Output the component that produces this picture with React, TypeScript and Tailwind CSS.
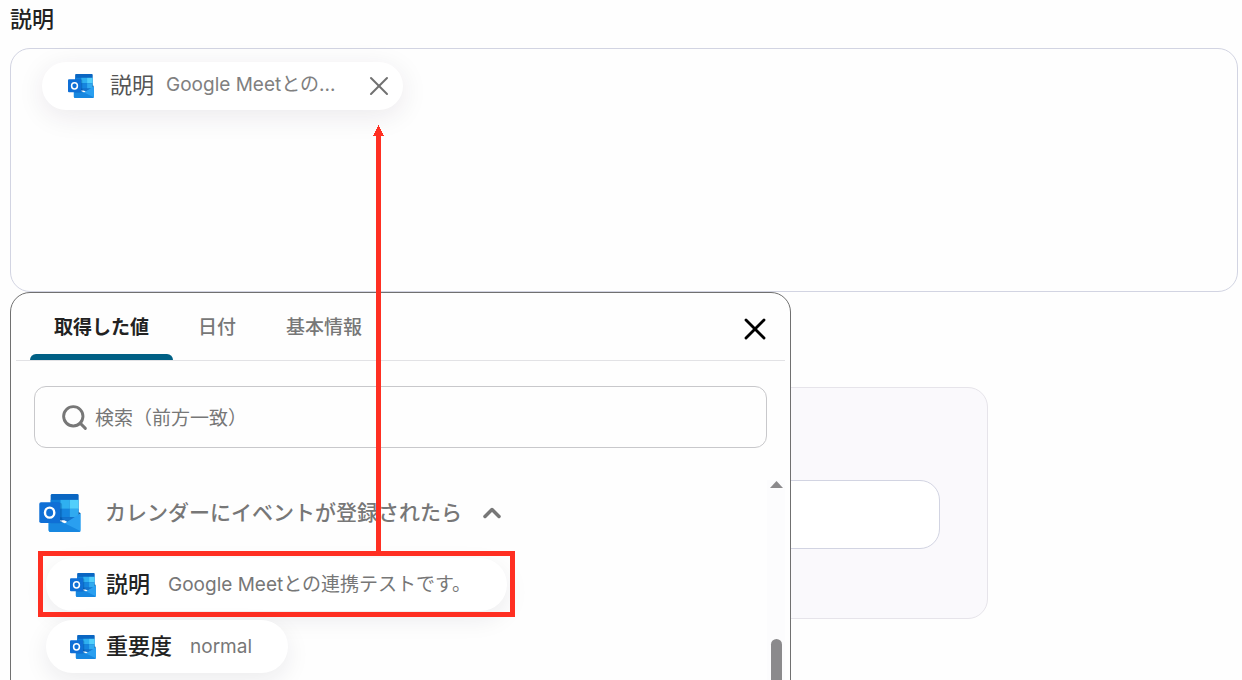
import { ChevronUp, Search, X } from "lucide-react";

const tabs = [
    { name: "取得した値", active: true },
    { name: "日付", active: false },
    { name: "基本情報", active: false },
];

const values = [
    { label: "説明", sample: "Google Meetとの連携テストです。", marked: true },
    { label: "重要度", sample: "normal", marked: false },
];

function OutlookLogo({ className }: { className: string }) {
    return (
        <svg viewBox="0 0 120 110" className={className} aria-hidden="true">
            <path d="M37 0h73a4 4 0 0 1 4 4v72H33V4a4 4 0 0 1 4-4z" fill="#0a66c2" />
            <path d="M33 17h28v26H33z" fill="#1080dc" />
            <path d="M61 17h27v26H61z" fill="#2fb0f0" />
            <path d="M88 17h26v26H88z" fill="#52cffb" />
            <path d="M33 43h28v24H33z" fill="#0b6cc6" />
            <path d="M61 43h27v24H61z" fill="#1585df" />
            <path d="M88 43h26v24H88z" fill="#30aaf0" />
            <path d="M61 67h48L82 82z" fill="#1474ce" />
            <path d="M114 52l6 4-6 5z" fill="#15508c" />
            <path d="M120 56v49a5 5 0 0 1-5 5H32a5 5 0 0 1-5-5V72l45 14z" fill="#2a9ff0" />
            <path d="M27 62l92 45a5 5 0 0 1-4 3H32a5 5 0 0 1-5-5z" fill="#1787e0" />
            <path d="M33 25h27a6 6 0 0 1 6 6v48a6 6 0 0 1-6 6H33z" fill="#004a94" opacity=".3" />
            <rect y="24" width="60" height="60" rx="5" fill="#0f6fd6" />
            <ellipse cx="30" cy="54" rx="13.500" ry="14.500" fill="none" stroke="#fff" strokeWidth="7" />
        </svg>
    );
}

// Red frame round a value, with an arrow up to the chip it becomes
function Marker() {
    return (
        <div className="pointer-events-none absolute -inset-x-2 -top-[7px] -bottom-[6px] border-[5px] border-[#ff2f22]">
            <svg
                viewBox="0 0 12 431"
                className="absolute bottom-full left-[330px] h-[431px] w-3"
                shapeRendering="crispEdges"
                aria-hidden="true"
            >
                <path d="M5.500 0L11 11H8V431H3V11H0z" fill="#ff2f22" />
            </svg>
        </div>
    );
}

function DescriptionField() {
    return (
        <section>
            <h2 className="h-12 pt-[3px] text-[22px] leading-8 font-medium text-[#222]">説明</h2>
            <div className="h-[244px] rounded-[20px] border border-[#d2d4e2] pt-[13px] pl-[31px]">
                <div className="inline-flex h-12 items-center rounded-full bg-white pr-2 pl-[26px] shadow-[0_6px_28px_rgba(40,20,60,0.09)]">
                    <OutlookLogo className="h-6 w-[26px]" />
                    <span className="ml-4 pb-[2px] text-[22px] leading-8 text-[#555]">説明</span>
                    <span className="ml-3 pb-[2px] text-[19px] leading-8 text-[#808080]">Google Meetとの...</span>
                    <button type="button" aria-label="削除" className="ml-7 text-[#707070]">
                        <X className="size-8" strokeWidth={1.5} />
                    </button>
                </div>
            </div>
        </section>
    );
}

function ValuePicker() {
    return (
        <div className="absolute top-0 left-0 flex h-[640px] w-[781px] flex-col rounded-t-[20px] border border-[#707070] bg-[#fefefe] px-[5px]">
            <div className="flex h-[68px] items-start border-b border-[#e2e2e5] pr-3 pl-[14px]">
                <div role="tablist" className="flex h-full">
                    {tabs.map((tab) => (
                        <button
                            key={tab.name}
                            type="button"
                            role="tab"
                            aria-selected={tab.active}
                            className={
                                tab.active
                                    ? "relative px-6 pt-1 text-[19px] font-bold text-[#222]"
                                    : "relative px-[25px] pt-1 text-[19px] font-medium text-[#777]"
                            }
                        >
                            {tab.name}
                            {tab.active && (
                                <span className="absolute inset-x-0 bottom-0 h-[6px] rounded-t-md bg-[#006085]" />
                            )}
                        </button>
                    ))}
                </div>
                <button type="button" aria-label="閉じる" className="mt-[18px] ml-auto text-black">
                    <X className="size-9" strokeWidth={1.9} />
                </button>
            </div>

            <label className="mx-[18px] mt-[25px] flex h-[62px] shrink-0 items-center rounded-xl border border-[#c8c8cb] pl-[25px]">
                <Search className="size-[29px] text-[#777]" strokeWidth={2.4} />
                <input
                    type="search"
                    aria-label="検索"
                    placeholder="検索（前方一致）"
                    className="ml-[6px] min-w-0 flex-1 bg-transparent pt-1 text-[19px] outline-none placeholder:text-[#777]"
                />
            </label>

            <div className="mt-8 flex flex-1">
                <div className="flex-1 pl-[23px]">
                    <button type="button" aria-expanded="true" className="flex h-[66px] items-center">
                        <OutlookLogo className="h-[38px] w-[42px]" />
                        <span className="ml-6 text-[21px] font-medium text-[#777]">
                            カレンダーにイベントが登録されたら
                        </span>
                        <ChevronUp className="ml-4 size-7 text-[#777]" strokeWidth={3} />
                    </button>
                    <ul className="mt-3 flex flex-col items-start gap-[9px] pl-[7px]">
                        {values.map((value) => (
                            <li key={value.label} className="relative">
                                <button
                                    type="button"
                                    className="flex h-[53px] items-center rounded-full bg-white pr-9 pl-6 shadow-[0_8px_24px_rgba(30,20,50,0.08)]"
                                >
                                    <OutlookLogo className="h-6 w-[26px]" />
                                    <span className="ml-[10px] text-[22px] font-medium text-[#222]">{value.label}</span>
                                    <span className="ml-[18px] pt-[2px] text-[19px] text-[#777]">{value.sample}</span>
                                </button>
                                {value.marked && <Marker />}
                            </li>
                        ))}
                    </ul>
                </div>
                <div className="flex w-[18px] flex-col items-center bg-[#fcfcfd] pt-px" aria-hidden="true">
                    <svg viewBox="0 0 13 7" className="h-[7px] w-[13px]">
                        <path d="M6.500 0L13 7H0z" fill="#8b8a8c" />
                    </svg>
                    <div className="mt-[151px] w-[11px] flex-1 rounded-full bg-[#8b8a8c]" />
                </div>
            </div>
        </div>
    );
}

export default function App() {
    return (
        <main className="h-screen overflow-hidden bg-[#fefefe] pr-1 pl-[10px] font-[Inter,'Noto_Sans_CJK_JP',sans-serif]">
            <DescriptionField />
            <div className="relative">
                <div className="pt-[95px]">
                    <div className="h-[232px] max-w-[978px] rounded-[20px] border border-[#e6e4ea] bg-[#faf9fc] px-[47px] pt-[92px]">
                        <input
                            type="text"
                            aria-label="値"
                            className="h-[69px] w-full rounded-[20px] border border-[#d2d4e2] bg-white px-5"
                        />
                    </div>
                </div>
                <ValuePicker />
            </div>
        </main>
    );
}
